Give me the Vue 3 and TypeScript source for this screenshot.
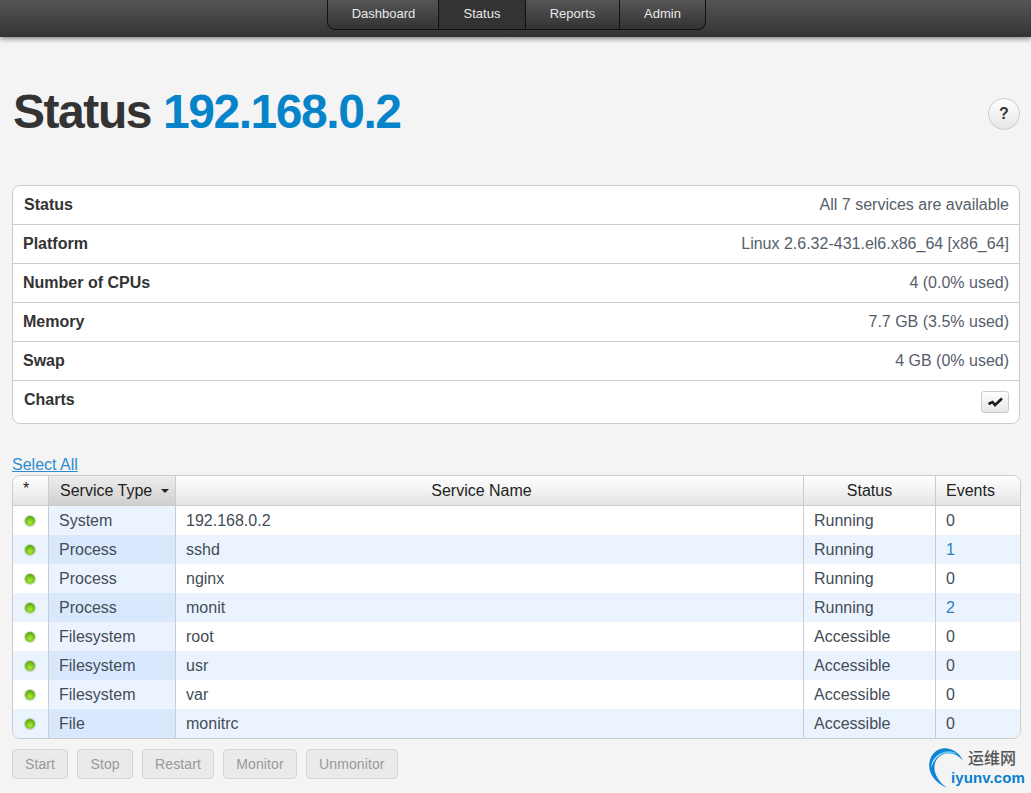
<script setup lang="ts">
// Monit status page: summary table and service list
const summary = [
  { label: 'Status', value: 'All 7 services are available' },
  { label: 'Platform', value: 'Linux 2.6.32-431.el6.x86_64 [x86_64]' },
  { label: 'Number of CPUs', value: '4 (0.0% used)' },
  { label: 'Memory', value: '7.7 GB (3.5% used)' },
  { label: 'Swap', value: '4 GB (0% used)' },
]

const menu = ['Dashboard', 'Status', 'Reports', 'Admin']

const services = [
  { type: 'System', name: '192.168.0.2', status: 'Running', events: 0 },
  { type: 'Process', name: 'sshd', status: 'Running', events: 1 },
  { type: 'Process', name: 'nginx', status: 'Running', events: 0 },
  { type: 'Process', name: 'monit', status: 'Running', events: 2 },
  { type: 'Filesystem', name: 'root', status: 'Accessible', events: 0 },
  { type: 'Filesystem', name: 'usr', status: 'Accessible', events: 0 },
  { type: 'Filesystem', name: 'var', status: 'Accessible', events: 0 },
  { type: 'File', name: 'monitrc', status: 'Accessible', events: 0 },
]

const actions = ['Start', 'Stop', 'Restart', 'Monitor', 'Unmonitor']
</script>

<template>
  <div class="page">
    <header class="topbar">
      <nav class="menu">
        <a v-for="item in menu" :key="item" class="menu-item" :class="{ active: item === 'Status' }">{{ item }}</a>
      </nav>
    </header>

    <main class="content">
      <div class="heading">
        <h1>Status <span class="host">192.168.0.2</span></h1>
        <button class="help">?</button>
      </div>

      <div class="summary">
        <div v-for="row in summary" :key="row.label" class="summary-row">
          <strong>{{ row.label }}</strong>
          <span>{{ row.value }}</span>
        </div>
        <div class="summary-row charts">
          <strong>Charts</strong>
          <button class="chart-btn" aria-label="Charts">
            <svg width="15" height="11" viewBox="0 0 15 11" fill="none" stroke="#1c1c1c" stroke-width="2.6">
              <path d="M0.5 7 L4.5 5 L7 8 L14 1.5" />
            </svg>
          </button>
        </div>
      </div>

      <a class="select-all">Select All</a>

      <table class="services">
        <thead>
          <tr>
            <th class="col-dot star">*</th>
            <th class="col-type sorted">Service Type <i class="caret"></i></th>
            <th class="col-name">Service Name</th>
            <th class="col-status">Status</th>
            <th class="col-events">Events</th>
          </tr>
        </thead>
        <tbody>
          <tr v-for="s in services" :key="s.name">
            <td class="col-dot"><i class="led"></i></td>
            <td class="col-type">{{ s.type }}</td>
            <td>{{ s.name }}</td>
            <td>{{ s.status }}</td>
            <td :class="{ linked: s.events > 0 }">{{ s.events }}</td>
          </tr>
        </tbody>
      </table>

      <div class="footer-row">
        <div class="actions">
          <button v-for="a in actions" :key="a" class="action" disabled>{{ a }}</button>
        </div>
        <div class="logo">
          <svg class="logo-mark" width="42" height="44" viewBox="0 0 42 44" fill="none">
            <path d="M36 15 C32 4 17 -2 8 6 C-2 15 0 33 20 42 C9 34 4 22 10 13 C17 4 30 6 36 15 Z" fill="#0a86d2" />
            <path d="M31 8 C23 3 12 5 7 14 C11 8 21 6 31 8 Z" fill="#6cc8f0" />
            <path d="M4 22 C4 15 9 9 15 7 C10 11 6 16 4 22 Z" fill="#fff" fill-opacity="0.65" />
          </svg>
          <span class="logo-cn">运维网</span>
          <span class="logo-en">iyunv.com</span>
        </div>
      </div>
    </main>
  </div>
</template>

<style scoped>
.page {
  width: 1031px;
  height: 793px;
  overflow: hidden;
  background: #f4f4f4;
  font-family: "Liberation Sans", Arial, sans-serif;
  font-size: 16px;
  color: #333;
}

.topbar {
  height: 37px;
  background: linear-gradient(#555, #333);
  box-shadow: 0 2px 5px rgba(0, 0, 0, 0.45);
  display: flex;
  padding-left: 327px;
}

.menu {
  display: flex;
  height: 29px;
  border: 1px solid #111;
  border-top: 0;
  border-radius: 0 0 8px 8px;
  background: linear-gradient(#555, #333);
  overflow: hidden;
  font-size: 13px;
}

.menu-item {
  display: flex;
  align-items: center;
  justify-content: center;
  box-sizing: border-box;
  padding-bottom: 2px;
  color: #e8e8e8;
  border-left: 1px solid #111;
  width: 94px;
}

.menu-item:first-child {
  width: 110px;
  padding-left: 1px;
  border-left: 0;
}

.menu-item:nth-child(2) {
  width: 87px;
}

.menu-item:last-child {
  width: 86px;
}

.menu-item.active {
  background: #333;
}

.content {
  padding: 0 11px 0 12px;
}

.heading {
  display: flex;
  align-items: center;
  justify-content: space-between;
  height: 148px;
  padding-top: 5px;
  box-sizing: border-box;
}

h1 {
  margin: 0 0 4px 1px;
  font-size: 48px;
  line-height: 52px;
  font-weight: 700;
  letter-spacing: -1.45px;
  color: #333;
}

.host {
  color: #0784c9;
}

.help {
  width: 32px;
  height: 32px;
  border-radius: 50%;
  border: 1px solid #ccc;
  background: linear-gradient(#fff, #e6e6e6);
  font: 700 16px "Liberation Sans", Arial, sans-serif;
  color: #333;
  padding: 0;
}

.summary {
  background: #fff;
  border: 1px solid #ccc;
  border-radius: 8px;
}

.summary-row {
  display: flex;
  justify-content: space-between;
  align-items: center;
  height: 38px;
  padding: 0 10px;
  border-bottom: 1px solid #ccc;
}

.summary-row:first-child {
  padding-left: 11px;
}

.summary-row span {
  color: #555e6a;
}

.summary-row.charts {
  height: 42px;
  border-bottom: 0;
  padding-left: 11px;
  align-items: flex-start;
  padding-top: 10px;
  box-sizing: border-box;
}

.chart-btn {
  width: 28px;
  height: 22px;
  border: 1px solid #ccc;
  border-radius: 3px;
  background: linear-gradient(#fff, #e6e6e6);
  display: flex;
  align-items: center;
  justify-content: center;
  padding: 0;
}

.select-all {
  display: block;
  margin-top: 31px;
  line-height: 20px;
  color: #2b8ccf;
  text-decoration: underline;
}

.services {
  width: 1008px;
  table-layout: fixed;
  border-collapse: separate;
  border-spacing: 0;
  background: #fff;
  border: 1px solid #ccc;
  border-radius: 8px;
  overflow: hidden;
}

.services th {
  height: 29px;
  padding: 0;
  font-weight: 400;
  color: #222;
  background: linear-gradient(#fff, #e4e4e4);
  border-bottom: 1px solid #ccc;
  border-left: 1px solid #ccc;
  box-sizing: content-box;
}

.services th:first-child,
.services td:first-child {
  border-left: 0;
}

.services th.sorted {
  background: linear-gradient(#eee, #cfcfcf);
}

.services td {
  height: 29px;
  padding: 0 0 0 10px;
  border-left: 1px solid #ccc;
  color: #444c56;
}

.services tbody tr:nth-child(even) td {
  background: #ebf4fe;
}

.col-dot { width: 35px; }
.col-type { width: 126px; }
.col-name { width: 627px; }
.col-status { width: 131px; }
.col-events { width: 84px; }

.services th.star {
  width: 25px;
  padding-left: 10px;
  text-align: left;
  vertical-align: top;
  line-height: 25px;
}

.services th.col-name {
  width: 611px;
  padding-right: 16px;
}

.services td.col-dot {
  padding: 0;
  text-align: center;
  background: #fff;
}

.services tbody tr:nth-child(even) td.col-dot {
  background: #ebf4fe;
}

.services td.col-type {
  background: #ebf4fe;
}

.services tbody tr:nth-child(even) td.col-type {
  background: #d9e8fc;
}

.services td.linked {
  color: #2b7fc0;
}

.services th.col-events {
  text-align: left;
  padding-left: 10px;
  width: 74px;
}

.services th.col-type {
  text-align: left;
  padding-left: 11px;
  width: 115px;
}

.caret {
  display: inline-block;
  margin-left: 4px;
  vertical-align: middle;
  border-left: 4px solid transparent;
  border-right: 4px solid transparent;
  border-top: 4px solid #222;
}

.led {
  display: inline-block;
  width: 10px;
  height: 10px;
  margin: 5px 1px 0 0;
  border-radius: 50%;
  background: radial-gradient(circle at 50% 65%, #b4ec3c, #6cbc14 55%, #3a8a08);
  box-shadow: 0 0 1px 1px rgba(120, 140, 110, 0.35);
}

.footer-row {
  display: flex;
  justify-content: space-between;
  margin-top: 10px;
}

.actions {
  display: flex;
  gap: 9.4px;
}

.action {
  height: 30px;
  padding: 0 12px;
  border: 1px solid #d4d4d4;
  border-radius: 4px;
  background: #eaeaea;
  color: #999;
  font: 14px "Liberation Sans", Arial, sans-serif;
  letter-spacing: 0.1px;
}

.logo {
  position: relative;
  width: 100px;
  height: 44px;
  margin-top: -3px;
  margin-right: -7px;
}

.logo-mark {
  position: absolute;
  left: 0;
  top: 0;
}

.logo-cn {
  position: absolute;
  left: 41px;
  top: 5px;
  font: 500 16px/16px "Liberation Sans", "Noto Sans CJK SC", sans-serif;
  color: #555;
}

.logo-en {
  position: absolute;
  left: 24px;
  top: 24px;
  font: 700 15px/15px "Liberation Sans", Arial, sans-serif;
  letter-spacing: 0.1px;
  color: #0a7fd0;
}
</style>
